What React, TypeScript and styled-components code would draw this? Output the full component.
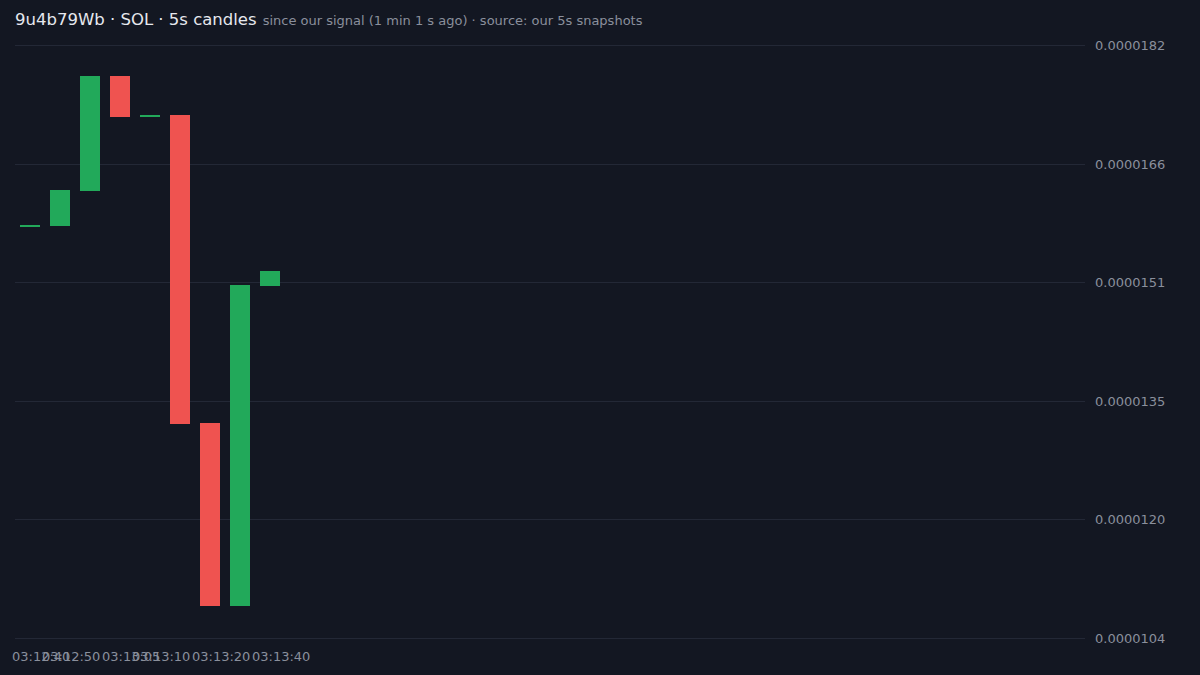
import React from "react";
import styled, { createGlobalStyle } from "styled-components";

const Global = createGlobalStyle`
  html, body { margin: 0; background: #131722; }
  body { font-family: "DejaVu Sans", sans-serif; }
`;

const Page = styled.div`
  width: 1200px;
  height: 675px;
  background: #131722;
  overflow: hidden;
`;

const Header = styled.div`
  height: 36px;
  padding: 10px 15px 0;
  display: flex;
  align-items: baseline;
  gap: 6px;
  box-sizing: border-box;
`;

const Title = styled.span`
  color: #e6e8ee;
  font-size: 16.5px;
`;

const Sub = styled.span`
  color: #8a8f9c;
  font-size: 13px;
`;

const Chart = styled.svg`
  display: block;
`;

const OFF = 36;
const grid = [
  [45, "0.0000182"],
  [164, "0.0000166"],
  [282, "0.0000151"],
  [401, "0.0000135"],
  [519, "0.0000120"],
  [638, "0.0000104"],
] as const;

const candles: [number, number, number, boolean][] = [
  [20, 225, 227, true],
  [50, 190, 226, true],
  [80, 76, 191, true],
  [110, 76, 117, false],
  [140, 115, 117, true],
  [170, 115, 424, false],
  [200, 423, 606, false],
  [230, 285, 606, true],
  [260, 271, 286, true],
];

const times: [number, string][] = [
  [12, "03:12:40"],
  [42, "03:12:50"],
  [102, "03:13:05"],
  [132, "03:13:10"],
  [192, "03:13:20"],
  [252, "03:13:40"],
];

export default function App() {
  return (
    <Page>
      <Global />
      <Header>
        <Title>9u4b79Wb · SOL · 5s candles</Title>
        <Sub>since our signal (1 min 1 s ago) · source: our 5s snapshots</Sub>
      </Header>
      <Chart width={1200} height={675 - OFF} viewBox={`0 ${OFF} 1200 ${675 - OFF}`}>
        {grid.map(([y, label]) => (
          <g key={label}>
            <line x1={15} x2={1085} y1={y + 0.5} y2={y + 0.5} stroke="#232836" strokeWidth={1} />
            <text x={1095} y={y + 4.5} fill="#8a8f9c" fontSize={13} fontFamily="DejaVu Sans, sans-serif">
              {label}
            </text>
          </g>
        ))}
        {candles.map(([x, y1, y2, up], i) => (
          <rect key={i} x={x} y={y1} width={20} height={Math.max(1, y2 - y1)} fill={up ? "#22a95a" : "#ef5350"} />
        ))}
        {times.map(([x, t]) => (
          <text key={t} x={x} y={661} fill="#8a8f9c" fontSize={13} fontFamily="DejaVu Sans, sans-serif">
            {t}
          </text>
        ))}
      </Chart>
    </Page>
  );
}
